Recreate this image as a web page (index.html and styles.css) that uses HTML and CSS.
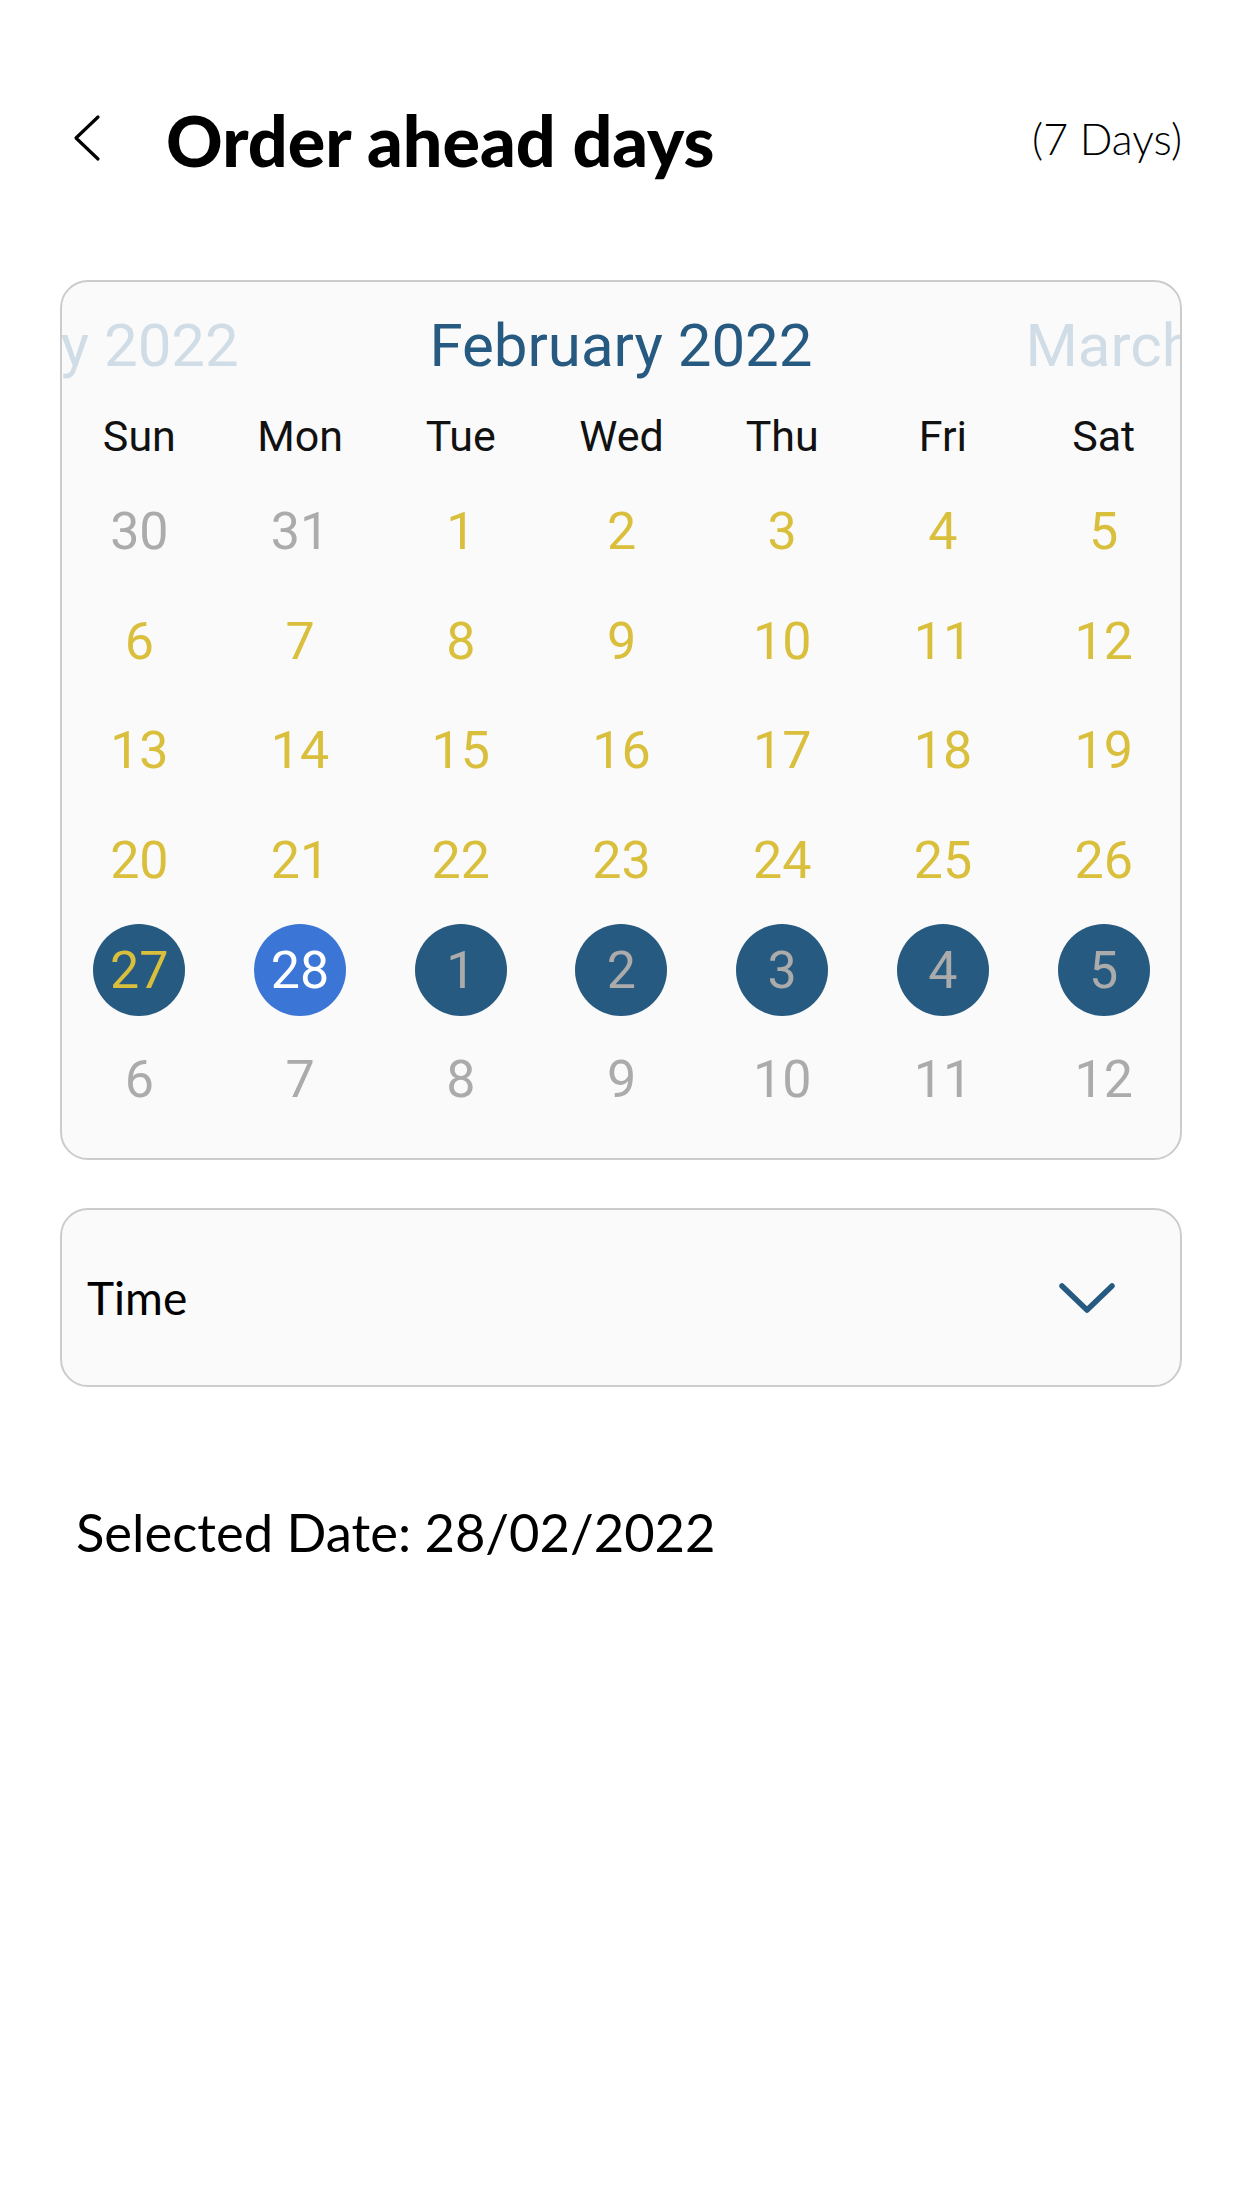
FILE: index.html
```html
<!DOCTYPE html>
<html>
<head>
<meta charset="utf-8">
<title>Order ahead days</title>
<link rel="stylesheet" href="styles.css">
</head>
<body>
<div class="screen">
  <header class="header">
    <svg class="back" width="28" height="48" viewBox="0 0 28 48"><polyline points="25,3 3,24 25,45" fill="none" stroke="#000" stroke-width="3.2" stroke-linecap="round" stroke-linejoin="round"/></svg>
    <h1 class="title">Order ahead days</h1>
    <span class="days-count">(7 Days)</span>
  </header>

  <section class="calendar">
    <div class="months">
      <div class="month faded">January 2022</div>
      <div class="month current">February 2022</div>
      <div class="month faded">March 2022</div>
    </div>
    <div class="weekdays">
      <span>Sun</span><span>Mon</span><span>Tue</span><span>Wed</span><span>Thu</span><span>Fri</span><span>Sat</span>
    </div>
    <div class="days">
      <span class="day out">30</span><span class="day out">31</span><span class="day in">1</span><span class="day in">2</span><span class="day in">3</span><span class="day in">4</span><span class="day in">5</span>
      <span class="day in">6</span><span class="day in">7</span><span class="day in">8</span><span class="day in">9</span><span class="day in">10</span><span class="day in">11</span><span class="day in">12</span>
      <span class="day in">13</span><span class="day in">14</span><span class="day in">15</span><span class="day in">16</span><span class="day in">17</span><span class="day in">18</span><span class="day in">19</span>
      <span class="day in">20</span><span class="day in">21</span><span class="day in">22</span><span class="day in">23</span><span class="day in">24</span><span class="day in">25</span><span class="day in">26</span>
      <span class="day in"><b class="dot range">27</b></span><span class="day"><b class="dot selected">28</b></span><span class="day out"><b class="dot range">1</b></span><span class="day out"><b class="dot range">2</b></span><span class="day out"><b class="dot range">3</b></span><span class="day out"><b class="dot range">4</b></span><span class="day out"><b class="dot range">5</b></span>
      <span class="day out">6</span><span class="day out">7</span><span class="day out">8</span><span class="day out">9</span><span class="day out">10</span><span class="day out">11</span><span class="day out">12</span>
    </div>
  </section>

  <div class="time-select">
    <span class="time-label">Time</span>
    <svg class="chev" width="58" height="32" viewBox="0 0 58 32"><polyline points="4,4 29,28 54,4" fill="none" stroke="#275a80" stroke-width="5.5" stroke-linecap="round" stroke-linejoin="round"/></svg>
  </div>

  <p class="selected-date">Selected Date: 28/02/2022</p>
</div>
</body>
</html>
```

FILE: styles.css
```css
* { box-sizing: border-box; }
html, body { margin: 0; padding: 0; background: #fff; }
body { width: 1242px; height: 2208px; font-family: "Lato", "Liberation Sans", sans-serif; color: #000; }

.screen { padding-top: 90px; }

.header {
  display: flex;
  align-items: center;
  height: 96px;
  padding: 0 60px 0 73px;
}
.back { flex: 0 0 auto; }
.title {
  margin: 4px 0 0 65px;
  font-family: "Lato", sans-serif;
  font-weight: 900;
  font-size: 70px;
  flex: 1 1 auto;
}
.days-count {
  font-family: "Lato", sans-serif;
  font-weight: 300;
  font-size: 43px;
  color: #000;
}

.calendar {
  margin: 94px 60px 0;
  height: 880px;
  border: 2px solid #cccccc;
  border-radius: 28px;
  background: #fafafa;
  overflow: hidden;
  font-family: "Roboto", sans-serif;
}
.months {
  display: flex;
  justify-content: center;
  height: 126px;
  align-items: center;
  overflow: hidden;
}
.month {
  flex: 0 0 564px;
  text-align: center;
  font-size: 60px;
  white-space: nowrap;
}
.month.current { color: #275a80; }
.month.faded { color: #d0dde6; }

.weekdays {
  display: grid;
  grid-template-columns: repeat(7, 1fr);
  height: 69px;
  padding-bottom: 14px;
  margin: 0 -4px 0 -3px;
  align-items: center;
  text-align: center;
  font-size: 43px;
  color: #111;
}

.days {
  display: grid;
  grid-template-columns: repeat(7, 1fr);
  grid-auto-rows: 109.6px;
  margin: 0 -4px 0 -3px;
  font-size: 52px;
}
.day {
  display: flex;
  align-items: center;
  justify-content: center;
}
.day.out { color: #ababab; }
.day.in { color: #d9bf3b; }
.dot {
  display: flex;
  align-items: center;
  justify-content: center;
  width: 92px;
  height: 92px;
  border-radius: 50%;
  font-weight: 400;
}
.dot.range { background: #275a80; }
.dot.selected { background: #3b76d6; color: #fff; }

.time-select {
  margin: 48px 60px 0;
  height: 179px;
  border: 2px solid #cccccc;
  border-radius: 28px;
  background: #fafafa;
  display: flex;
  align-items: center;
  justify-content: space-between;
  padding: 0 64px 0 25px;
}
.time-label {
  font-family: "Lato", sans-serif;
  font-size: 46px;
  color: #000;
}

.selected-date {
  margin: 115px 0 0 76px;
  line-height: 60px;
  font-family: "Lato", sans-serif;
  font-size: 52.5px;
  color: #000;
}
```
